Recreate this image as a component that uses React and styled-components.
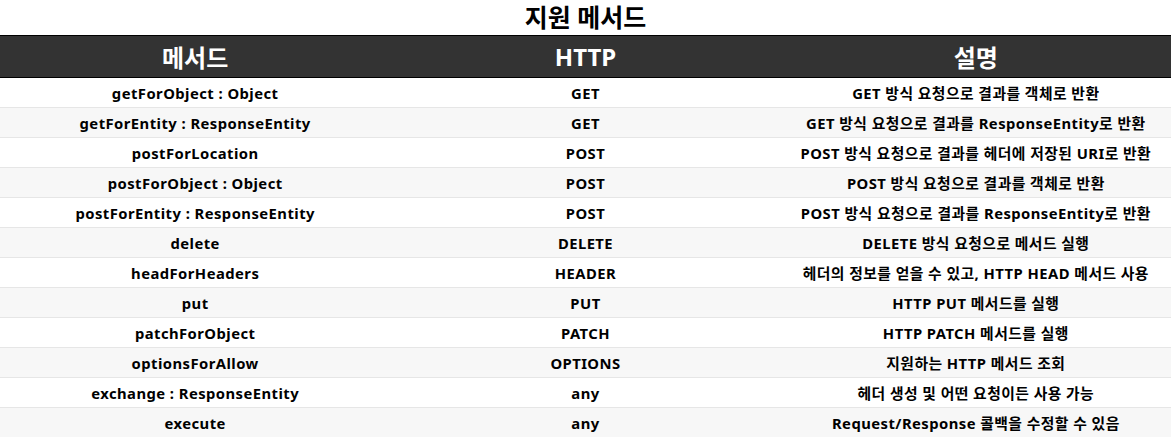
import styled, { createGlobalStyle } from 'styled-components';

const GlobalStyle = createGlobalStyle`
    body {
        margin: 0;
        background: #fff;
        font-family: "Noto Sans", "Noto Sans CJK KR", sans-serif;
        color: #000;
    }
`;

const Wrapper = styled.div`
    width: 1171px;
`;

const Title = styled.h2`
    margin: 0;
    height: 35px;
    line-height: 34px;
    text-align: center;
    font-size: 25px;
    font-weight: 700;
`;

const Table = styled.table`
    width: 100%;
    border-collapse: collapse;
    table-layout: fixed;
`;

const HeadCell = styled.th`
    background: #333;
    color: #fff;
    height: 41px;
    padding: 0;
    font-size: 24px;
    font-weight: 700;
    border-top: 1px solid #000;
    border-bottom: 1px solid #000;
`;

const Row = styled.tr`
    background: ${(p) => (p.$odd ? '#f7f7f7' : '#fff')};
    border-top: ${(p) => (p.$first ? 'none' : '1px solid #e6e6e6')};
`;

const Cell = styled.td`
    height: 29px;
    padding: 0;
    text-align: center;
    font-size: 14.8px;
    font-weight: 700;
    letter-spacing: 0.45px;
    white-space: nowrap;
`;

const rows = [
    ['getForObject : Object', 'GET', 'GET 방식 요청으로 결과를 객체로 반환'],
    ['getForEntity : ResponseEntity', 'GET', 'GET 방식 요청으로 결과를 ResponseEntity로 반환'],
    ['postForLocation', 'POST', 'POST 방식 요청으로 결과를 헤더에 저장된 URI로 반환'],
    ['postForObject : Object', 'POST', 'POST 방식 요청으로 결과를 객체로 반환'],
    ['postForEntity : ResponseEntity', 'POST', 'POST 방식 요청으로 결과를 ResponseEntity로 반환'],
    ['delete', 'DELETE', 'DELETE 방식 요청으로 메서드 실행'],
    ['headForHeaders', 'HEADER', '헤더의 정보를 얻을 수 있고, HTTP HEAD 메서드 사용'],
    ['put', 'PUT', 'HTTP PUT 메서드를 실행'],
    ['patchForObject', 'PATCH', 'HTTP PATCH 메서드를 실행'],
    ['optionsForAllow', 'OPTIONS', '지원하는 HTTP 메서드 조회'],
    ['exchange : ResponseEntity', 'any', '헤더 생성 및 어떤 요청이든 사용 가능'],
    ['execute', 'any', 'Request/Response 콜백을 수정할 수 있음'],
];

const App = () => {
    return (
        <Wrapper>
            <GlobalStyle />
            <Title>지원 메서드</Title>
            <Table>
                <thead>
                    <tr>
                        <HeadCell>메서드</HeadCell>
                        <HeadCell>HTTP</HeadCell>
                        <HeadCell>설명</HeadCell>
                    </tr>
                </thead>
                <tbody>
                    {rows.map((r, i) => (
                        <Row key={r[0]} $odd={i % 2 === 1} $first={i === 0}>
                            <Cell>{r[0]}</Cell>
                            <Cell>{r[1]}</Cell>
                            <Cell>{r[2]}</Cell>
                        </Row>
                    ))}
                </tbody>
            </Table>
        </Wrapper>
    );
};

export default App;
